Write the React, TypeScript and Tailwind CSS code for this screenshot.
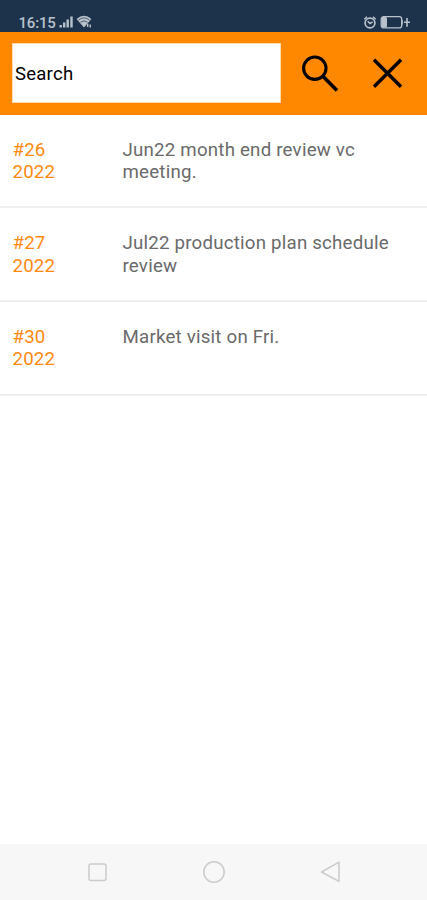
interface Meeting {
  id: number;
  year: number;
  title: string;
}

const meetings: Meeting[] = [
  { id: 26, year: 2022, title: "Jun22 month end review vc meeting." },
  { id: 27, year: 2022, title: "Jul22 production plan schedule review" },
  { id: 30, year: 2022, title: "Market visit on Fri." },
];

function StatusBar() {
  return (
    <div className="flex h-[31.5px] items-end justify-between bg-[#1d334c] pr-[16.5px] pb-[2px] pl-[18.5px] text-[#b9c2cb]">
      <div className="flex items-end">
        <span className="w-[38px] translate-y-px text-[15px] leading-[15px] font-medium tracking-[-0.2px] whitespace-nowrap">
          16:15
        </span>
        <svg width="15" height="15" viewBox="0 0 15 15" fill="currentColor" className="ml-[2px]">
          <rect x="0.5" y="10" width="2.4" height="2.5" />
          <rect x="4" y="7.5" width="2.4" height="5" />
          <rect x="7.5" y="4.5" width="2.4" height="8" />
          <rect x="11.3" y="1.5" width="2.4" height="11" />
        </svg>
        <svg width="17" height="15" viewBox="0 0 17 15" className="ml-[2.5px]">
          <path d="M0.6 4 Q8 -2.6 15.4 4 L8 12.4 Z" fill="currentColor" />
          <path d="M2.5 5 Q8 0.8 13.5 5 M4.5 7.2 Q8 4.5 11.5 7.2" fill="none" stroke="#1d334c" strokeWidth="0.7" />
          <path d="M11.7 8.8v3.2M14.2 9.4v3.2" stroke="currentColor" strokeWidth="1.4" />
        </svg>
      </div>
      <div className="flex items-end">
        <svg width="14" height="15" viewBox="0 0 14 15" fill="none" stroke="currentColor">
          <circle cx="7" cy="8" r="4.9" strokeWidth="1.7" />
          <path d="M1.3 4.2 4 1.9M12.7 4.2 10 1.9M4.7 6.2 7 8.6l2.6-1.8" strokeWidth="1.5" />
        </svg>
        <svg width="31" height="15" viewBox="0 0 31 15" fill="none" stroke="currentColor" className="ml-[3px]">
          <rect x="1.2" y="1.7" width="20.5" height="11.2" rx="2.5" strokeWidth="1.3" />
          <rect x="1.5" y="2" width="5.5" height="10.6" rx="1.5" fill="currentColor" stroke="none" />
          <path d="M22 5v4.6M24 7.3h6M27 3v8.8" strokeWidth="1.6" />
        </svg>
      </div>
    </div>
  );
}

function SearchBar() {
  return (
    <header className="flex h-[83px] items-center bg-[#ff8800] pl-[11.5px] text-black">
      <div className="flex h-[60px] w-[269.5px] items-center border border-[#ffd9ae] bg-white pt-[3.5px] pl-[2.5px] text-[18.5px] tracking-[0.25px]">
        Search
      </div>
      <button aria-label="Search" className="ml-[18px]">
        <svg width="42" height="42" viewBox="0 0 42 42" fill="none" stroke="currentColor">
          <circle cx="15.8" cy="16.2" r="11.2" strokeWidth="3.1" />
          <path d="M23.9 24.3 38 38.4" strokeWidth="3.6" />
        </svg>
      </button>
      <button aria-label="Close" className="ml-[29px]">
        <svg width="34" height="34" viewBox="0 0 34 34" fill="none" stroke="currentColor" strokeWidth="3.4">
          <path d="M4 3.8 31 30.8M31 3.8 4 30.8" />
        </svg>
      </button>
    </header>
  );
}

function MeetingRow({ meeting }: { meeting: Meeting }) {
  return (
    <li className="flex h-[93.7px] border-b-2 border-[#efefef] pt-[24px] pl-[12.5px] text-[18.7px] leading-[22.6px]">
      <div className="w-[110px] shrink-0 tracking-[0.15px] text-[#ff8a12]">
        <div>#{meeting.id}</div>
        <div>{meeting.year}</div>
      </div>
      <div className="w-[275px] tracking-[0.21px] text-[#6a6a6a]">{meeting.title}</div>
    </li>
  );
}

function NavBar() {
  return (
    <nav className="flex h-14 items-center bg-[#f7f7f7] pl-[87px] text-[#cbcbcb]">
      <svg width="21" height="24" viewBox="0 0 21 24" fill="none" stroke="currentColor" strokeWidth="1.5">
        <rect x="2" y="4" width="17" height="16.5" rx="2" />
      </svg>
      <svg width="24" height="24" viewBox="0 0 24 24" fill="none" stroke="currentColor" strokeWidth="1.5" className="ml-[94px]">
        <circle cx="12" cy="12" r="10.2" />
      </svg>
      <svg width="24" height="24" viewBox="0 0 24 24" fill="none" stroke="currentColor" strokeWidth="1.5" className="ml-[93px]">
        <path d="M2.5 12 20 2.2v19.2Z" strokeLinejoin="round" />
      </svg>
    </nav>
  );
}

export default function App() {
  return (
    <div className="flex h-screen w-full flex-col bg-white font-['Roboto',sans-serif]">
      <StatusBar />
      <SearchBar />
      <ul className="flex-1">
        {meetings.map((meeting) => (
          <MeetingRow key={meeting.id} meeting={meeting} />
        ))}
      </ul>
      <NavBar />
    </div>
  );
}
